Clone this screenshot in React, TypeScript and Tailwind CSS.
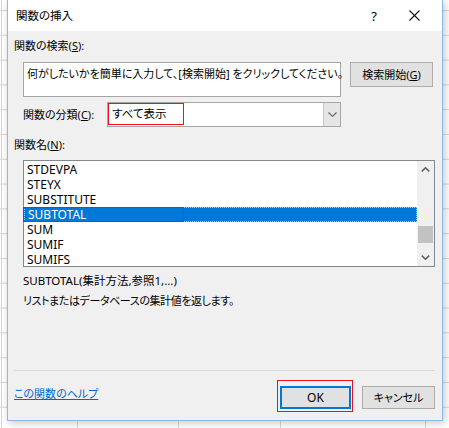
import React from "react";

const Chevron = ({ dir, w = 9, h = 5, stroke = "#606060", sw = 1.6 }: { dir: "up" | "down"; w?: number; h?: number; stroke?: string; sw?: number }) => (
  <svg width={w} height={h} viewBox={`0 0 ${w} ${h}`} fill="none">
    {dir === "up" ? (
      <polyline points={`0.8,${h - 0.6} ${w / 2},0.8 ${w - 0.8},${h - 0.6}`} stroke={stroke} strokeWidth={sw} />
    ) : (
      <polyline points={`0.8,0.6 ${w / 2},${h - 0.8} ${w - 0.8},0.6`} stroke={stroke} strokeWidth={sw} />
    )}
  </svg>
);

const items = ["STDEVPA", "STEYX", "SUBSTITUTE", "SUBTOTAL", "SUM", "SUMIF", "SUMIFS"];

export default function App() {
  return (
    <div className="relative w-[449px] h-[428px] overflow-hidden bg-white [background-image:linear-gradient(#d6d6d6_1px,transparent_1px),linear-gradient(90deg,transparent_1px,#d6d6d6_1px_2px,transparent_2px_77px,#d6d6d6_77px_78px,transparent_78px_178px,#d6d6d6_178px_179px,transparent_179px_280px,#d6d6d6_280px_281px,transparent_281px_425px,#d6d6d6_425px_426px,transparent_426px)] [background-size:449px_24.8px,449px_428px] [background-position:0_10px,0_0] font-['Noto_Sans','Noto_Sans_CJK_JP',sans-serif] [font-feature-settings:'palt'] text-[11px] text-black">
      <div className="ml-[7px] w-[436px] h-[421px] flex flex-col border-x border-b border-[#8cb8e4] bg-[#f0f0f0] shadow-[2px_2px_8px_rgba(0,0,0,0.22)]">
        {/* title bar */}
        <div className="h-[31px] bg-white flex items-center pl-[8px]">
          <span className="leading-[16px] text-[11.5px]">関数の挿入</span>
          <div className="ml-auto flex items-center h-full">
            <div className="w-[24px] flex justify-center text-[13px] leading-[16px]">?</div>
            <div className="w-[56px] flex justify-center">
              <svg width="11" height="11" viewBox="0 0 11 11">
                <path d="M0.5 0.5 L10.5 10.5 M10.5 0.5 L0.5 10.5" stroke="#111" strokeWidth="1.1" />
              </svg>
            </div>
          </div>
        </div>

        {/* body */}
        <div className="flex-1 flex flex-col px-[6px]">
          <div className="mt-[7px] leading-[16px]">
            関数の検索(<span className="underline">S</span>):
          </div>
          <div className="mt-[8px] ml-[9px] flex items-start">
            <div className="w-[318px] h-[35px] border border-[#a5a5a5] bg-white pl-[3px] pt-[3px] leading-[16px] whitespace-nowrap">
              何がしたいかを簡単に入力して、[検索開始] をクリックしてください。
            </div>
            <div className="ml-[9px] w-[83px] h-[25px] border border-[#adadad] bg-[#e1e1e1] flex items-center justify-center leading-[16px]">
              検索開始(<span className="underline">G</span>)
            </div>
          </div>
          <div className="mt-[5px] ml-[9px] flex items-center">
            <div className="w-[84px] leading-[16px]">
              関数の分類(<span className="underline">C</span>):
            </div>
            <div className="w-[234px] h-[25px] border border-[#a5a5a5] bg-white flex items-stretch">
              <div className="flex-1 flex items-start">
                <div className="w-[76px] h-[22px] border border-[#e8141d] pl-[3px] leading-[20px] text-[11.5px]">すべて表示</div>
              </div>
              <div className="w-[17px] bg-[#e5e5e5] border-l border-[#c8c8c8] flex items-center justify-center">
                <svg width="9" height="5" viewBox="0 0 9 5" fill="none">
                  <polyline points="0.5,0.5 4.5,4.3 8.5,0.5" stroke="#606060" strokeWidth="1.1" />
                </svg>
              </div>
            </div>
          </div>
          <div className="mt-[10px] leading-[16px]">
            関数名(<span className="underline">N</span>):
          </div>
          <div className="mt-[7px] ml-[9px] w-[412px] h-[107px] border border-[#828790] bg-white flex text-[12px]">
            <div className="flex-1 pt-[1px]">
              {items.map((it) =>
                it === "SUBTOTAL" ? (
                  <div key={it} className="h-[15px] bg-[#0078d7] border border-dotted border-[#f3c86a] flex items-start">
                    <div className="-ml-[2px] -mt-[1px] w-[161px] h-[15px] border border-[#e8141d] pl-[4px] leading-[13px] text-white">
                      SUBTOTAL
                    </div>
                  </div>
                ) : (
                  <div key={it} className="h-[15px] leading-[15px] pl-[3px]">
                    {it}
                  </div>
                )
              )}
            </div>
            <div className="w-[17px] bg-[#f0f0f0] flex flex-col items-center">
              <div className="h-[17px] flex items-center justify-center">
                <Chevron dir="up" />
              </div>
              <div className="mt-[48px] w-[15px] h-[17px] bg-[#c2c2c2]" />
              <div className="mt-auto h-[17px] flex items-center justify-center">
                <Chevron dir="down" />
              </div>
            </div>
          </div>
          <div className="mt-[6px] ml-[9px] leading-[16px] text-[11.5px]">SUBTOTAL(集計方法,参照1,...)</div>
          <div className="mt-[4px] ml-[9px] leading-[16px] tracking-[-0.4px]">リストまたはデータベースの集計値を返します。</div>

          <div className="mt-auto w-[421px] border-t border-[#dadada]" />
          <div className="h-[49px] flex items-start">
            <div className="mt-[15px] leading-[16px] text-[#0066cc] underline">この関数のヘルプ</div>
            <div className="ml-auto mt-[9px] w-[76px] h-[32px] border border-[#e8141d] p-[2px]">
              <div className="mt-[3px] w-[71px] h-[23px] border-2 border-[#0078d7] bg-[#e1e1e1] flex items-center justify-center leading-[16px] text-[12px]">
                OK
              </div>
            </div>
            <div className="ml-[9px] mr-[1px] mt-[15px] w-[73px] h-[23px] border border-[#adadad] bg-[#e1e1e1] flex items-center justify-center leading-[16px]">
              キャンセル
            </div>
          </div>
        </div>
      </div>
    </div>
  );
}
